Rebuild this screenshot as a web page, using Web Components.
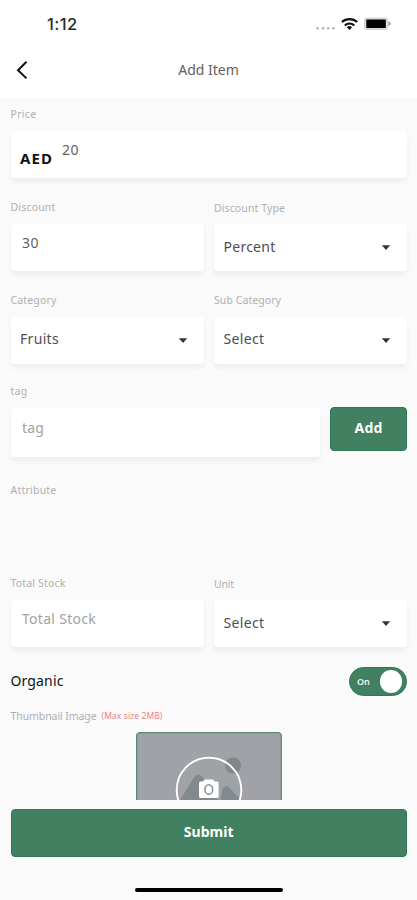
<!DOCTYPE html>
<html lang="en">
<head>
<meta charset="utf-8">
<title>Add Item</title>
<style>
html,body{margin:0;height:900px;background:#fafafa;overflow:hidden}
body{font-family:"Noto Sans","Open Sans",sans-serif;color:#555}
</style>
</head>
<body>
<add-item-page></add-item-page>
<script>
const attach = (el, html) => { const r = el.attachShadow({mode:'open'}); r.innerHTML = html; return r; };

/* A single line of text, tracked so that it spans the width given in "w". */
customElements.define('text-line', class extends HTMLElement {
  connectedCallback() {
    const r = attach(this, `<style>:host{display:block;flex:none;white-space:nowrap;line-height:16px;font-size:14px}
      span{display:inline-block;transform:translateY(var(--dy,0px))}</style><span><slot></slot></span>`);
    const w = parseFloat(this.getAttribute('w')), s = r.querySelector('span');
    const n = this.textContent.length;
    if (w) { s.style.letterSpacing = ((w - s.getBoundingClientRect().width) / n).toFixed(3) + 'px'; }
  }
});

customElements.define('status-bar', class extends HTMLElement {
  connectedCallback() {
    attach(this, `<style>
      :host{display:flex;box-sizing:border-box;height:48px;padding:0 26px 0 47px;align-items:center;background:#fff}
      text-line{font-family:Inter,sans-serif;font-size:16.5px;font-weight:500;color:#2a2a2a;margin-right:auto}
      svg{display:block}
      </style>
      <text-line w="30.5">1:12</text-line>
      <svg width="76" height="20" viewBox="0 0 76 20">
        <g fill="#b5b5b5"><circle cx="2.5" cy="14.3" r="1.3"/><circle cx="8" cy="14.3" r="1.3"/><circle cx="13.3" cy="14.3" r="1.3"/><circle cx="18.5" cy="14.3" r="1.3"/></g>
        <g fill="none" stroke="#111" stroke-width="2.1"><path d="M26.900 8.100a11.200 11.200 0 0 1 15.300 0"/><path d="M29.800 11.400a7 7 0 0 1 9.500 0"/></g>
        <path d="M34.500 16l-2.600-2.700a3.800 3.800 0 0 1 5.200 0z" fill="#111"/>
        <rect x="49.600" y="4.200" width="23" height="11.200" rx="2" fill="#ddd" stroke="#ccc"/>
        <rect x="51.300" y="5.500" width="19.500" height="8.600" rx=".6" fill="#000"/>
        <path d="M73.600 7.600v4.400q2-.6 2-2.200t-2-2.200z" fill="#888"/>
      </svg>`);
  }
});

customElements.define('nav-bar', class extends HTMLElement {
  connectedCallback() {
    attach(this, `<style>
      :host{display:grid;grid-template-columns:1fr auto 1fr;align-items:center;height:49px;padding:0 15px 5px;background:#fff;box-sizing:border-box}
      svg{display:block}text-line{color:#626262;--dy:-.5px}
      </style>
      <svg width="14" height="22" viewBox="0 0 14 22"><path d="M11.500 2.800 3 11.200l8.500 8.200" fill="none" stroke="#111" stroke-width="2"/></svg>
      <text-line w="60"><slot></slot></text-line><i></i>`);
  }
});

customElements.define('form-field', class extends HTMLElement {
  connectedCallback() {
    const a = k => this.getAttribute(k) || '';
    attach(this, `<style>
      :host{display:block;min-width:0}
      .label{height:34px;display:flex;align-items:center;gap:5px}
      .label text-line{font-size:10.5px;color:#b0b0b0}
      .card{box-sizing:border-box;height:var(--h,47px);background:#fff;border-radius:4px;box-shadow:0 4px 5px rgba(0,0,0,.05);display:flex;align-items:center;padding:0 16px 0 9.500px}
      .card svg{margin-left:auto;display:block}
      </style>
      <div class="label"><text-line w="${a('lw')}" style="--dy:${a('ldy')||0}px">${a('label')}</text-line></div>
      ${this.hasAttribute('bare') ? '' : `<div class="card"><slot></slot>${this.hasAttribute('select') ? '<svg width="10" height="6" viewBox="0 0 10 6"><path d="M.8.3h8.400L5 4.900z" fill="#333"/></svg>' : ''}</div>`}`);
  }
});

customElements.define('field-row', class extends HTMLElement {
  connectedCallback() {
    attach(this, `<style>:host{display:grid;grid-template-columns:var(--cols,193fr 193fr);column-gap:10.500px;align-items:start}</style><slot></slot>`);
  }
});

customElements.define('green-button', class extends HTMLElement {
  connectedCallback() {
    attach(this, `<style>
      :host{display:flex;align-items:center;justify-content:center;box-sizing:border-box;background:#418162;border:1px solid #2c7955;border-radius:4px;color:#fff;font-weight:700}
      </style><slot></slot>`);
  }
});

customElements.define('toggle-switch', class extends HTMLElement {
  connectedCallback() {
    attach(this, `<style>
      :host{display:flex;align-items:center;justify-content:space-between;box-sizing:border-box;width:58px;height:29px;border-radius:15px;background:#418162;border:1px solid #2c7955;padding:0 4px 0 7px}
      text-line{font-size:9px;font-weight:600;color:#eef5f1}
      i{width:22.500px;height:22.500px;border-radius:50%;background:#fff}
      </style><text-line w="13"><slot></slot></text-line><i></i>`);
  }
});

customElements.define('image-picker', class extends HTMLElement {
  connectedCallback() {
    attach(this, `<style>:host{display:block;width:146px;height:68px;overflow:hidden}svg{display:block}</style>
      <svg width="146" height="68" viewBox="0 0 146 68">
        <rect x=".6" y=".6" width="144.800" height="90" rx="3.500" fill="#a0a2a8" stroke="#5d8879" stroke-width="1.300"/>
        <g fill="#7f878b"><circle cx="97" cy="33.500" r="8"/>
        <path d="M40 75 58.500 44.500Q62 40.500 66 44.500L84 70 86.500 55.500 87 56.500Q90 52 94 56.500L112 75z"/></g>
        <circle cx="73" cy="58" r="32.300" fill="#a0a2a8" fill-opacity=".1" stroke="#fff" stroke-width="1.900"/>
        <path d="M64.500 49.500h2.700l1.300-2h8.600l1.300 2h2.700q1.500 0 1.500 1.500v13.500q0 1.500-1.500 1.500h-16.600q-1.500 0-1.500-1.500V51q0-1.500 1.500-1.500z" fill="#fff"/>
        <ellipse cx="72.800" cy="57.400" rx="3.900" ry="4.700" fill="#fff" stroke="#8f9396" stroke-width="1.600"/>
      </svg>`);
  }
});

customElements.define('add-item-page', class extends HTMLElement {
  connectedCallback() {
    attach(this, `<style>
      :host{display:flex;flex-direction:column;width:417px;height:900px;background:#fafafa;overflow:hidden}
      main{display:flex;flex-direction:column;padding:0 10px 0 10.500px}
      .g{margin-top:12px}
      .v{color:#606060}.s{color:#4e4e4e}.p{color:#a2a2a2}
      .add{height:44px;margin-top:33px}
      .organic{display:flex;justify-content:space-between;align-items:center;height:29px;margin-top:20px}
      .thumb{display:flex;gap:5px;align-items:center;height:36px}
      .thumb text-line{font-size:10.500px;color:#b0b0b0;--dy:1.500px}
      .thumb .max{font-size:8.500px;color:#ee7f8d;--dy:2px}
      image-picker{align-self:center}
      .submit{height:48px;margin:9px 10px 0 10.500px;flex:none}
      .home{width:148px;height:4px;border-radius:2px;background:#000;margin:31px auto 0}
      </style>
      <status-bar></status-bar><nav-bar>Add Item</nav-bar>
      <main>
        <form-field label="Price" lw="26"><text-line w="33" style="color:#111;font-weight:700;font-size:15px;--dy:3px">AED</text-line><text-line class="v" w="17" style="margin-left:9px;--dy:-5px">20</text-line></form-field>
        <field-row class="g">
          <form-field label="Discount" lw="45"><text-line class="v" w="17" style="margin-left:2px;--dy:-5px">30</text-line></form-field>
          <form-field label="Discount Type" lw="71" ldy="1" select><text-line class="s" w="52" style="--dy:-1px">Percent</text-line></form-field>
        </field-row>
        <field-row class="g">
          <form-field label="Category" lw="46" select><text-line class="s" w="39" style="--dy:-2px">Fruits</text-line></form-field>
          <form-field label="Sub Category" lw="67" select><text-line class="s" w="41" style="--dy:-2px">Select</text-line></form-field>
        </field-row>
        <field-row style="margin-top:10px;--cols:309.500fr 77fr;--h:49px">
          <form-field label="tag" lw="17" ldy="0"><text-line class="p" w="22" style="margin-left:2px;--dy:-5px">tag</text-line></form-field>
          <green-button class="add"><text-line w="28" style="--dy:-1px">Add</text-line></green-button>
        </field-row>
        <form-field label="Attribute" lw="46" bare style="margin-top:16px"></form-field>
        <field-row style="margin-top:59px">
          <form-field label="Total Stock" lw="55"><text-line class="p" w="74" style="margin-left:2px;--dy:-5px">Total Stock</text-line></form-field>
          <form-field label="Unit" lw="20" ldy="1" select><text-line class="s" w="41" style="--dy:-1px">Select</text-line></form-field>
        </field-row>
        <div class="organic"><text-line w="53" style="color:#111;--dy:-1px">Organic</text-line><toggle-switch>On</toggle-switch></div>
        <div class="thumb"><text-line w="86">Thumbnail Image</text-line><text-line class="max" w="61">(Max size 2MB)</text-line></div>
        <image-picker></image-picker>
      </main>
      <green-button class="submit"><text-line w="50" style="--dy:-1px">Submit</text-line></green-button>
      <div class="home"></div>`);
  }
});
</script>
</body>
</html>
